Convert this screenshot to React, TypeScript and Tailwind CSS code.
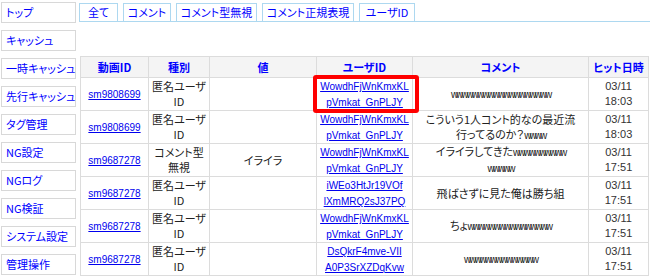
import React from "react";

const jp = "font-['Noto_Sans_CJK_JP',sans-serif] [font-feature-settings:'palt']";
const lat = "font-['Liberation_Sans','Noto_Sans_CJK_JP',sans-serif]";

const W = ({ n }: { n: number }) => (
  <span className={`${lat} text-[10px] tracking-[-2px]`}>{"w".repeat(n)}</span>
);

const sideItems = [
  "トップ",
  "キャッシュ",
  "一時キャッシュ",
  "先行キャッシュ",
  "タグ管理",
  "NG設定",
  "NGログ",
  "NG検証",
  "システム設定",
  "管理操作",
];

const tabs: [string, string][] = [
  ["全て", "w-[39px]"],
  ["コメント", "w-[48px]"],
  ["コメント型無視", "w-[81px]"],
  ["コメント正規表現", "w-[92px]"],
  ["ユーザID", "w-[56px]"],
];

type Row = {
  vid: string;
  kind: [string, string];
  val: string;
  uid: [string, string];
  comment: React.ReactNode;
  time: [string, string];
  hl?: boolean;
};

const rows: Row[] = [
  {
    vid: "sm9808699",
    kind: ["匿名ユーザ", "ID"],
    val: "",
    uid: ["WowdhFjWnKmxKL", "pVmkat_GnPLJY"],
    comment: <W n={19} />,
    time: ["03/11", "18:03"],
    hl: true,
  },
  {
    vid: "sm9808699",
    kind: ["匿名ユーザ", "ID"],
    val: "",
    uid: ["WowdhFjWnKmxKL", "pVmkat_GnPLJY"],
    comment: (
      <>
        こういう1人コント的なの最近流
        <br />
        行ってるのか？<W n={4} />
      </>
    ),
    time: ["03/11", "18:03"],
  },
  {
    vid: "sm9687278",
    kind: ["コメント型", "無視"],
    val: "イライラ",
    uid: ["WowdhFjWnKmxKL", "pVmkat_GnPLJY"],
    comment: (
      <>
        イライラしてきた<W n={10} />
        <br />
        <W n={5} />
      </>
    ),
    time: ["03/11", "17:51"],
  },
  {
    vid: "sm9687278",
    kind: ["匿名ユーザ", "ID"],
    val: "",
    uid: ["iWEo3HtJr19VOf", "lXmMRQ2sJ37PQ"],
    comment: <>飛ばさずに見た俺は勝ち組</>,
    time: ["03/11", "17:51"],
  },
  {
    vid: "sm9687278",
    kind: ["匿名ユーザ", "ID"],
    val: "",
    uid: ["WowdhFjWnKmxKL", "pVmkat_GnPLJY"],
    comment: (
      <>
        ちょ<W n={16} />
      </>
    ),
    time: ["03/11", "17:51"],
  },
  {
    vid: "sm9687278",
    kind: ["匿名ユーザ", "ID"],
    val: "",
    uid: ["DsQkrF4mve-VII", "A0P3SrXZDqKvw"],
    comment: <W n={14} />,
    time: ["03/11", "17:51"],
  },
];

const th = "border border-[#dcdcdc] bg-[#f4f4f4] font-bold text-[#0000ff] text-center h-[21px] p-0";
const td = "border border-[#dcdcdc] text-center align-middle p-0 h-[33px] leading-[15px]";

export default function App() {
  return (
    <div className={`w-[650px] h-[280px] bg-white overflow-hidden flex gap-[3px] text-[11px] ${jp}`}>
      <div className="flex flex-col gap-[7px] pt-[2px] pl-[1px] w-[76px] shrink-0">
        {sideItems.map((s) => (
          <div
            key={s}
            className="h-[21px] border border-[#d8d8d8] text-[#0000ff] pl-[4px] flex items-center whitespace-nowrap"
          >
            {s}
          </div>
        ))}
      </div>
      <div className="flex flex-col flex-1">
        <div className="flex gap-[5px] pt-[3px] border-b border-[#add8f0] h-[22px]">
          {tabs.map(([t, w]) => (
            <div
              key={t}
              className={`${w} h-[18px] border border-b-0 border-[#add8f0] text-[#0000ff] flex items-center justify-center whitespace-nowrap`}
            >
              {t}
            </div>
          ))}
        </div>
        <div className="pt-[34px] pl-[1px]">
          <table className="border-collapse border border-[#dcdcdc] table-fixed w-[568px] text-[#222]">
            <colgroup>
              <col className="w-[68px]" />
              <col className="w-[61px]" />
              <col className="w-[107px]" />
              <col className="w-[96px]" />
              <col className="w-[176px]" />
              <col className="w-[60px]" />
            </colgroup>
            <thead>
              <tr>
                <th className={th}>動画ID</th>
                <th className={th}>種別</th>
                <th className={th}>値</th>
                <th className={th}>ユーザID</th>
                <th className={th}>コメント</th>
                <th className={th}>ヒット日時</th>
              </tr>
            </thead>
            <tbody>
              {rows.map((r, i) => (
                <tr key={i}>
                  <td className={td}>
                    <a href="#" className={`${lat} text-[10px] text-[#0000ee] underline`}>
                      {r.vid}
                    </a>
                  </td>
                  <td className={td}>
                    {r.kind[0]}
                    <br />
                    {r.kind[1]}
                  </td>
                  <td className={td}>{r.val}</td>
                  <td className={`${td} relative`}>
                    <a href="#" className={`${lat} text-[10px] text-[#0000ee] underline leading-[15px]`}>
                      {r.uid[0]}
                      <br />
                      {r.uid[1]}
                    </a>
                    {r.hl && (
                      <div className="absolute left-[-4px] right-[-7px] top-[-3px] bottom-[-3px] border-[4px] border-[#ff0000] rounded-[3px] pointer-events-none" />
                    )}
                  </td>
                  <td className={td}>{r.comment}</td>
                  <td className={`${td} ${lat} text-[11px] text-[#333]`}>
                    {r.time[0]}
                    <br />
                    {r.time[1]}
                  </td>
                </tr>
              ))}
            </tbody>
          </table>
        </div>
      </div>
    </div>
  );
}
